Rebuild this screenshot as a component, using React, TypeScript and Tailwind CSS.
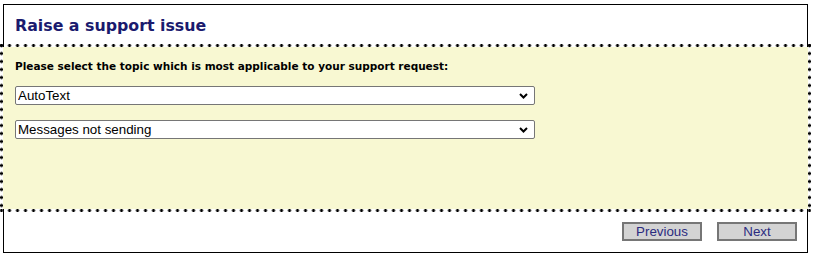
import React from 'react';

const Chevron: React.FC = () => (
    <svg
        className="pointer-events-none absolute right-[7px] top-1/2 -translate-y-1/2"
        width="9"
        height="6"
        viewBox="0 0 9 6"
    >
        <path d="M1 1 L4.5 4.5 L8 1" fill="none" stroke="#000" strokeWidth="2" />
    </svg>
);

const Dropdown: React.FC<{ value: string; options: string[] }> = ({ value, options }) => (
    <div className="relative w-[520px]">
        <select
            defaultValue={value}
            className="block h-[19px] w-full appearance-none rounded-[2px] border border-[#767676] bg-white pl-[2px] pr-5 text-[13.33px] leading-[17px] text-black outline-none"
            style={{ fontFamily: '"Liberation Sans", Arial, sans-serif' }}
        >
            {options.map((o) => (
                <option key={o}>{o}</option>
            ))}
        </select>
        <Chevron />
    </div>
);

const App: React.FC = () => {
    return (
        <div className="min-h-[257px] bg-white pt-[4px] pl-[3px] pr-[5px]">
            <div className="flex h-[249px] flex-col border border-black">
                {/* Header */}
                <div
                    className="flex h-[39px] items-center pl-[11px] pt-[2px] text-[15.8px] font-bold text-[#1a1a6e]"
                    style={{ fontFamily: '"DejaVu Sans", Verdana, sans-serif' }}
                >
                    Raise a support issue
                </div>

                {/* Topic selection - round dotted frame */}
                <div className="-mx-[4px] h-[168px] border-[3px] border-transparent pl-[12px] pt-[12px] [background:radial-gradient(circle,#000_1.2px,transparent_1.9px)_-2.5px_0/8px_3px_repeat-x_border-box,radial-gradient(circle,#000_1.2px,transparent_1.9px)_-2.5px_100%/8px_3px_repeat-x_border-box,radial-gradient(circle,#000_1.2px,transparent_1.9px)_0_-2.5px/3px_8px_repeat-y_border-box,radial-gradient(circle,#000_1.2px,transparent_1.9px)_100%_-2.5px/3px_8px_repeat-y_border-box,padding-box_#f8f8d2]">
                    <p
                        className="text-[10.5px] font-bold leading-[14px] text-black"
                        style={{ fontFamily: '"DejaVu Sans", Verdana, sans-serif' }}
                    >
                        Please select the topic which is most applicable to your support request:
                    </p>
                    <div className="mt-[13px] flex flex-col gap-[15px]">
                        <Dropdown value="AutoText" options={['AutoText', 'Email', 'Contacts']} />
                        <Dropdown
                            value="Messages not sending"
                            options={['Messages not sending', 'Messages not receiving', 'Other']}
                        />
                    </div>
                </div>

                {/* Navigation */}
                <div
                    className="flex justify-end gap-[15px] pr-[10px] pt-[10px]"
                    style={{ fontFamily: '"Liberation Sans", Arial, sans-serif' }}
                >
                    <button className="h-[19px] w-[80px] border-2 border-[#767676] bg-[#d3d3d3] text-[13.33px] leading-[15px] text-[#2b2b80]">
                        Previous
                    </button>
                    <button className="h-[19px] w-[80px] border-2 border-[#767676] bg-[#d3d3d3] text-[13.33px] leading-[15px] text-[#2b2b80]">
                        Next
                    </button>
                </div>
            </div>
        </div>
    );
};

export default App;
